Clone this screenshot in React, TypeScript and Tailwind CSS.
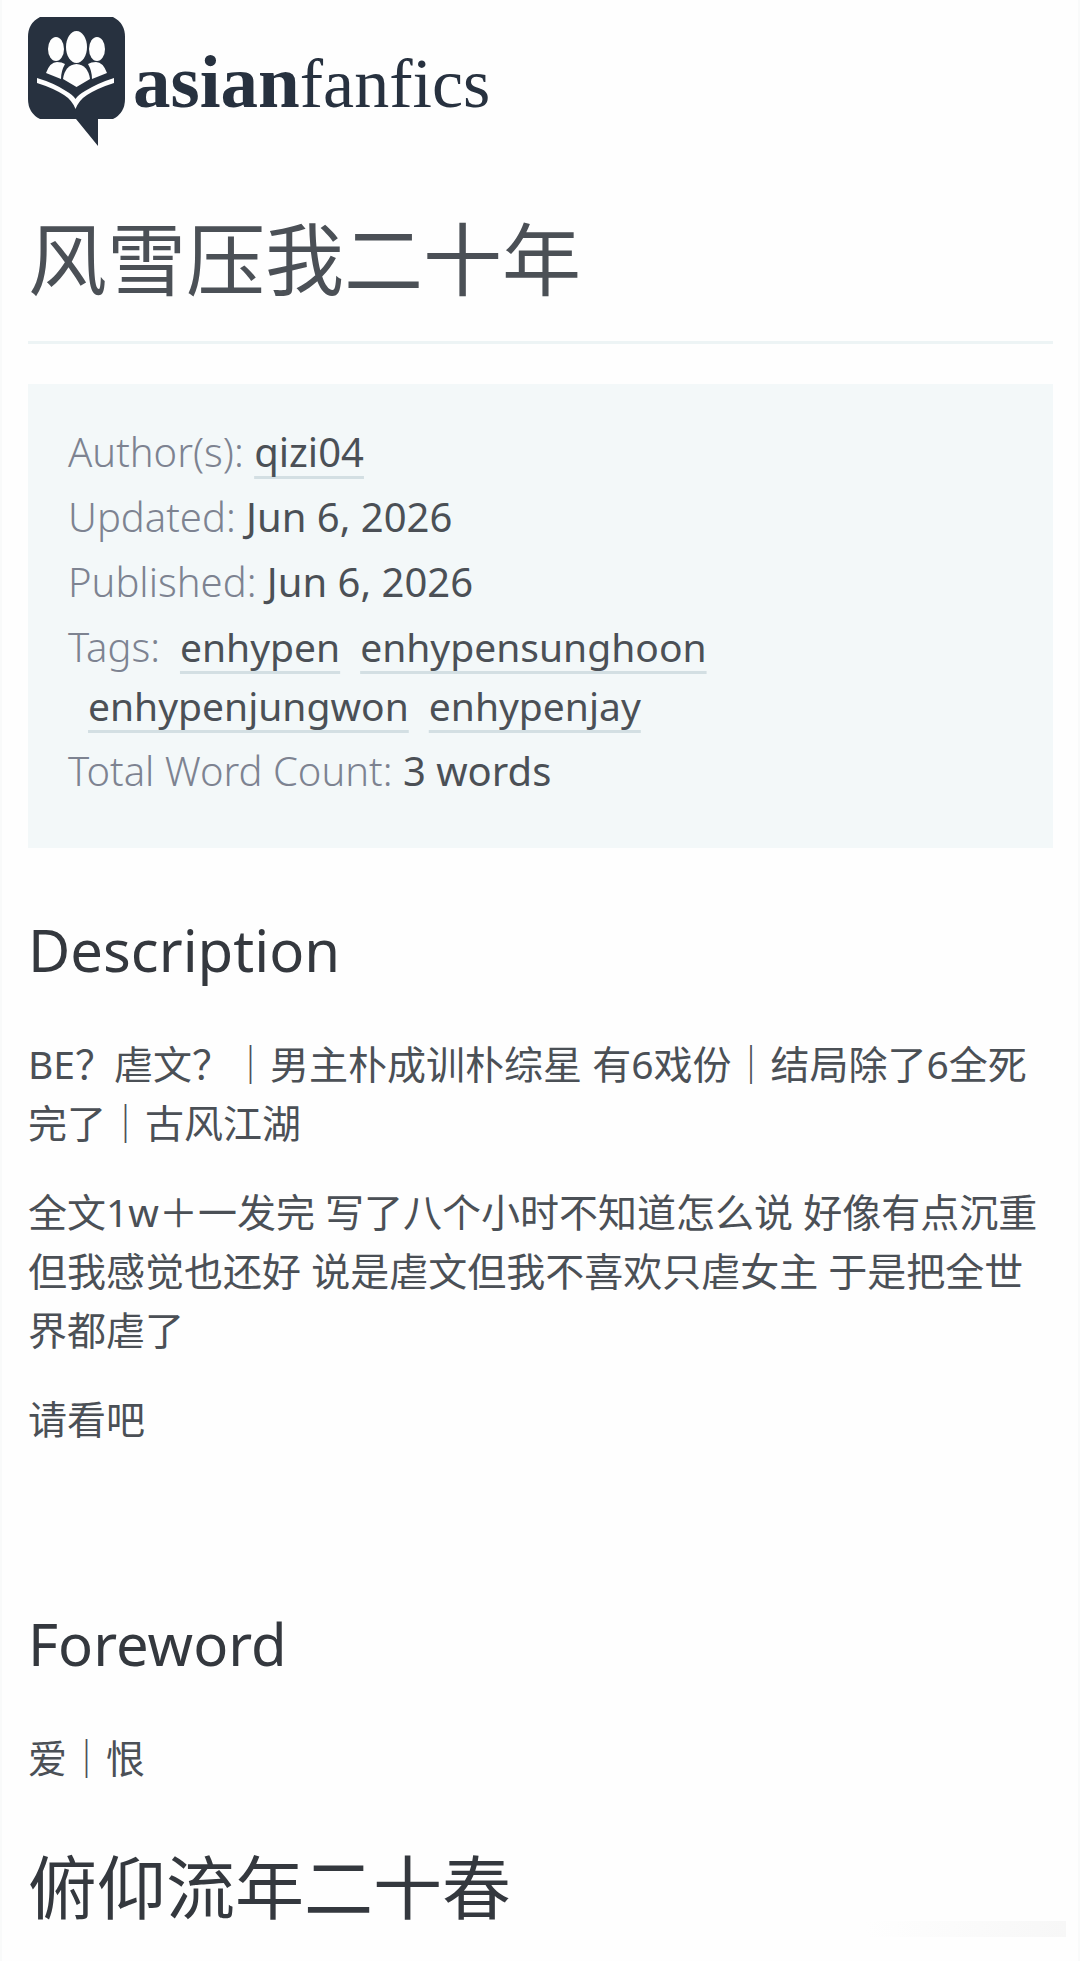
import React from 'react';

interface MetaRowProps {
    label: string;
    children: React.ReactNode;
}

const tags = ['enhypen', 'enhypensunghoon', 'enhypenjungwon', 'enhypenjay'];

const linkClass =
    'underline decoration-[#d3dfe3] decoration-[3px] underline-offset-[9px] [text-decoration-skip-ink:none]';

const LogoMark: React.FC = () => (
    <svg width="97" height="129" viewBox="0 0 97 129" aria-hidden="true">
        {/* Speech bubble */}
        <path d="M12 0H85Q97 6 97 20V82Q97 96 85 102H70V129L48 102H12Q0 96 0 82V20Q0 6 12 0Z" fill="#27313f" />
        {/* Readers */}
        <g fill="#fefefe">
            <ellipse cx="28" cy="32" rx="8" ry="12" />
            <ellipse cx="69" cy="32" rx="8" ry="12" />
            <ellipse cx="48.500" cy="30" rx="10.500" ry="16" />
            <path d="M18 56Q22 45 29 45Q34 45 37 47Q33 54 33 62Z" />
            <path d="M79 56Q75 45 68 45Q63 45 60 47Q64 54 64 62Z" />
            <path d="M35 62Q37 48 48.500 47Q60 48 62 62L48.500 70Z" />
        </g>
        {/* Open book */}
        <path d="M9 61Q26 66 38 74Q45 78 47.500 82Q50 78 57 74Q70 66 86 61V66Q70 71 59 78Q51 83 47.500 92Q44 83 36 78Q25 71 9 66Z" fill="#fefefe" />
    </svg>
);

const MetaRow: React.FC<MetaRowProps> = ({ label, children }) => (
    <div>
        <dt className="inline font-light text-[#7d8391]">{label}</dt> <dd className="inline">{children}</dd>
    </div>
);

const App: React.FC = () => {
    return (
        <div className="relative min-h-screen border-x-2 border-[#f9fafa] bg-[#fefefe] pt-[17px] pr-[25px] pb-4 pl-[26px] font-['Noto_Sans','Noto_Sans_CJK_SC',sans-serif] text-[39px] leading-[59px] text-[#4b5056]" lang="zh-CN">
            <header>
                <a href="#" className="flex items-start gap-2 font-['Liberation_Serif',serif] leading-[129px] text-[#27313f]">
                    <LogoMark />
                    <span className="flex items-baseline">
                        <span className="text-[75px] font-bold">asian</span>
                        <span className="text-[70px]">fanfics</span>
                    </span>
                </a>
            </header>

            <main>
                <h1 className="mt-[61px] border-b-[3px] border-[#edf4f5] pb-[30px] text-[79px] leading-[102px]">风雪压我二十年</h1>

                {/* Story details */}
                <dl className="mt-10 space-y-[6px] bg-[#f3f8f9] px-10 pt-[38px] pb-[48px] text-[40px]">
                    <MetaRow label="Author(s):">
                        <a href="#" className={linkClass}>qizi04</a>
                    </MetaRow>
                    <MetaRow label="Updated:">Jun 6, 2026</MetaRow>
                    <MetaRow label="Published:">Jun 6, 2026</MetaRow>
                    <div>
                        <dt className="inline font-light text-[#7d8391]">Tags:</dt>
                        <dd className="inline">
                            {tags.map((tag) => (
                                <span key={tag} className="ml-5 inline-block text-[39px]">
                                    <a href="#" className={linkClass}>{tag}</a>
                                </span>
                            ))}
                        </dd>
                    </div>
                    <MetaRow label="Total Word Count:">3 words</MetaRow>
                </dl>

                <section className="mt-[60px] space-y-[30px]">
                    <h2 className="text-[58px] leading-[84px] text-[#34383e]">Description</h2>
                    <p className="mt-[42px]">BE？虐文？｜男主朴成训朴综星 有6戏份｜结局除了6全死完了｜古风江湖</p>
                    <p>全文1w＋一发完 写了八个小时不知道怎么说 好像有点沉重 但我感觉也还好 说是虐文但我不喜欢只虐女主 于是把全世界都虐了</p>
                    <p>请看吧</p>
                </section>

                <section className="mt-[154px]">
                    <h2 className="text-[58px] leading-[84px] text-[#34383e]">Foreword</h2>
                    <p className="mt-[42px]">爱｜恨</p>
                    <h2 className="mt-[55px] text-[69px] leading-[90px] text-[#34383e]">俯仰流年二十春</h2>
                </section>
            </main>

            {/* Faint mark in the corner */}
            <div className="absolute right-3 bottom-[24px] h-4 w-[200px] bg-linear-to-r from-transparent to-[#f7f7f7]" aria-hidden="true" />
        </div>
    );
};

export default App;
